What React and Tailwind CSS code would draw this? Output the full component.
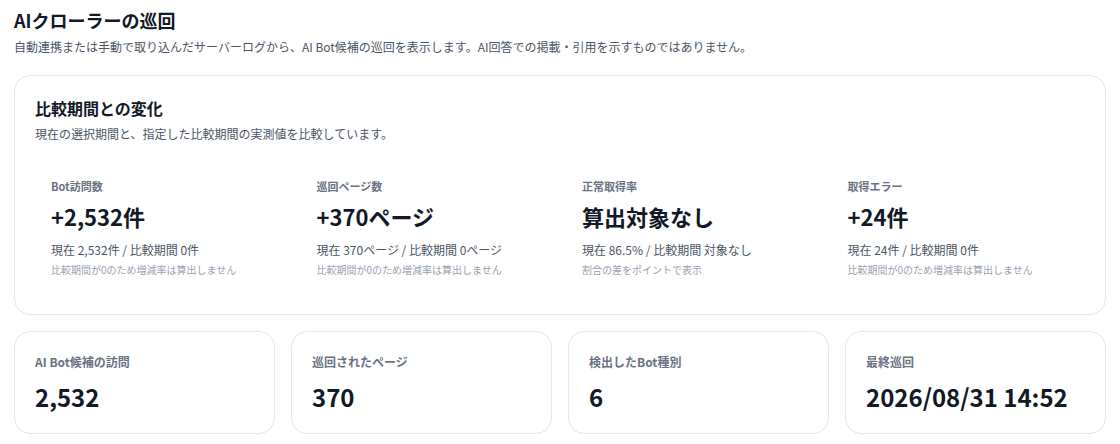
const changes = [
  {
    label: "Bot訪問数",
    value: "+2,532件",
    detail: "現在 2,532件 / 比較期間 0件",
    note: "比較期間が0のため増減率は算出しません",
  },
  {
    label: "巡回ページ数",
    value: "+370ページ",
    detail: "現在 370ページ / 比較期間 0ページ",
    note: "比較期間が0のため増減率は算出しません",
  },
  {
    label: "正常取得率",
    value: "算出対象なし",
    detail: "現在 86.5% / 比較期間 対象なし",
    note: "割合の差をポイントで表示",
  },
  {
    label: "取得エラー",
    value: "+24件",
    detail: "現在 24件 / 比較期間 0件",
    note: "比較期間が0のため増減率は算出しません",
  },
];

const stats = [
  { label: "AI Bot候補の訪問", value: "2,532" },
  { label: "巡回されたページ", value: "370" },
  { label: "検出したBot種別", value: "6" },
  { label: "最終巡回", value: "2026/08/31 14:52" },
];

const App = () => {
  return (
    <div
      className="min-h-screen bg-white px-[14px] pt-[6px] text-[#111827]"
      style={{ fontFamily: '"Noto Sans CJK JP", "Noto Sans", sans-serif' }}
    >
      <h1 className="text-[18px] font-bold leading-7">AIクローラーの巡回</h1>
      <p className="mt-[5px] text-xs leading-4 text-gray-600">
        自動連携または手動で取り込んだサーバーログから、AI Bot候補の巡回を表示します。AI回答での掲載・引用を示すものではありません。
      </p>

      <section className="mt-[20px] rounded-2xl border border-gray-200 p-5">
        <h2 className="text-base font-bold leading-6">比較期間との変化</h2>
        <p className="mt-1.5 text-xs leading-4 text-gray-600">
          現在の選択期間と、指定した比較期間の実測値を比較しています。
        </p>

        <div className="mt-5 grid grid-cols-4 gap-3">
          {changes.map((item) => (
            <div key={item.label} className="p-4">
              <div className="text-[11px] font-bold leading-4 text-gray-500">
                {item.label}
              </div>
              <div className="mt-1.5 text-[22px] font-bold leading-8">
                {item.value}
              </div>
              <div className="mt-2.5 text-xs leading-4 text-gray-600">
                {item.detail}
              </div>
              <div className="mt-1 text-[10px] leading-4 text-gray-400">
                {item.note}
              </div>
            </div>
          ))}
        </div>
      </section>

      <div className="mt-4 grid grid-cols-4 gap-4">
        {stats.map((stat) => (
          <div
            key={stat.label}
            className="rounded-2xl border border-gray-200 p-5"
          >
            <div className="text-xs font-bold leading-5 text-gray-500">
              {stat.label}
            </div>
            <div className="mt-[9px] text-2xl font-bold leading-8">
              {stat.value}
            </div>
          </div>
        ))}
      </div>
    </div>
  );
};

export default App;
